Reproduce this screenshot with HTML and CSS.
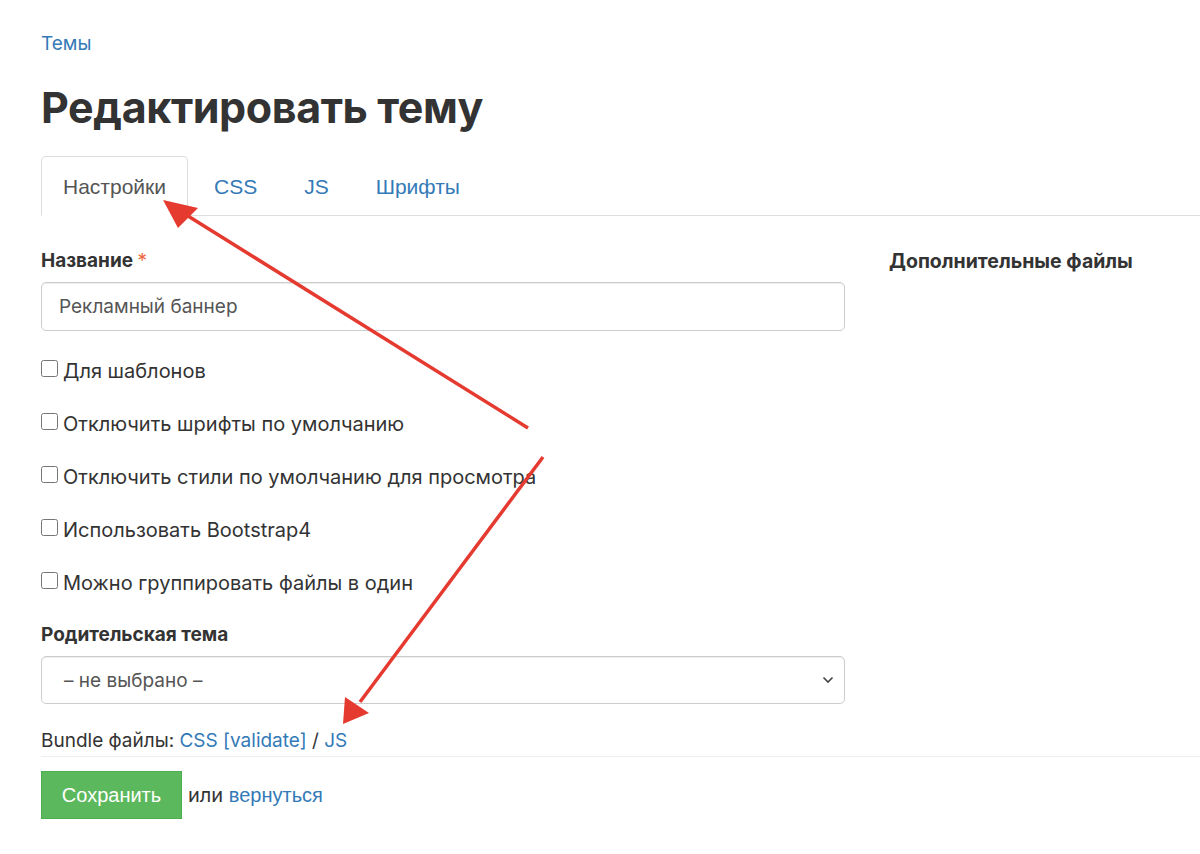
FILE: index.html
```html
<!DOCTYPE html>
<html lang="ru">
<head>
    <meta charset="UTF-8">
    <meta name="viewport" content="width=device-width, initial-scale=1.0">
    <title>Редактировать тему</title>
    <link rel="stylesheet" href="styles.css">
</head>
<body>
    <div class="page">
        <div class="crumbs"><a href="#">Темы</a></div>
        <h1>Редактировать тему</h1>

        <ul class="tabs">
            <li class="active"><a href="#">Настройки</a></li>
            <li><a href="#">CSS</a></li>
            <li><a href="#">JS</a></li>
            <li><a href="#">Шрифты</a></li>
        </ul>

        <div class="row">
            <div class="col-main">
                <label class="field-label">Название <span class="req">*</span></label>
                <input type="text" class="form-control" value="Рекламный баннер">

                <div class="check"><input type="checkbox" id="c1"><label for="c1">Для шаблонов</label></div>
                <div class="check"><input type="checkbox" id="c2"><label for="c2">Отключить шрифты по умолчанию</label></div>
                <div class="check"><input type="checkbox" id="c3"><label for="c3">Отключить стили по умолчанию для просмотра</label></div>
                <div class="check"><input type="checkbox" id="c4"><label for="c4">Использовать Bootstrap4</label></div>
                <div class="check"><input type="checkbox" id="c5"><label for="c5">Можно группировать файлы в один</label></div>

                <label class="field-label parent">Родительская тема</label>
                <div class="select">
                    <span>– не выбрано –</span>
                    <svg width="14" height="10" viewBox="0 0 14 10"><path d="M2.5 2.5 L7 7 L11.5 2.5" fill="none" stroke="#444" stroke-width="1.6"/></svg>
                </div>

                <div class="bundle">Bundle файлы: <a href="#">CSS</a> <a href="#">[validate]</a> / <a href="#">JS</a></div>
            </div>
            <div class="col-side">
                <div class="side-title">Дополнительные файлы</div>
            </div>
        </div>

        <div class="actions">
            <button class="btn-save">Сохранить</button>
            <span class="or">или <a href="#">вернуться</a></span>
        </div>
    </div>

    <!-- annotation arrows -->
    <svg class="arrows" width="1200" height="854" viewBox="0 0 1200 854">
        <line x1="528" y1="428" x2="188" y2="216" stroke="#e53a30" stroke-width="3.5"/>
        <polygon points="163,200 198,208 178,228" fill="#e53a30"/>
        <line x1="543" y1="457" x2="360" y2="702" stroke="#e53a30" stroke-width="3.5"/>
        <polygon points="343,724 345,697 369,713" fill="#e53a30"/>
    </svg>
</body>
</html>
```

FILE: styles.css
```css
body {
    margin: 0;
    padding: 0;
    background-color: #fff;
    font-family: Inter, "Noto Sans", sans-serif;
    font-size: 20px;
    color: #333;
}

a {
    color: #337ab7;
    text-decoration: none;
}

.page {
    padding: 0 0 0 41px;
}

.crumbs {
    padding-top: 31px;
    font-size: 19px;
    line-height: 26px;
}

h1 {
    margin: 22px 0 0 0;
    font-size: 43px;
    line-height: 56px;
    font-weight: 700;
    color: #333;
    letter-spacing: -0.4px;
}

.tabs {
    list-style: none;
    margin: 21px 0 0 0;
    padding: 0;
    display: flex;
    border-bottom: 1px solid #ddd;
}

.tabs li {
    margin-bottom: -1px;
}

.tabs a {
    display: block;
    padding: 0 21px;
    height: 58px;
    line-height: 60px;
    font-family: "Liberation Sans", Arial, sans-serif;
    font-size: 21px;
    color: #337ab7;
    border: 1px solid transparent;
    border-radius: 5px 5px 0 0;
}

.tabs li + li a {
    padding: 0 20px 0 25px;
}

.tabs li.active a {
    color: #555;
    background-color: #fff;
    border-color: #ddd;
    border-bottom-color: #fff;
}

.row {
    display: flex;
    gap: 44px;
    margin-top: 32px;
}

.col-main {
    width: 804px;
}

.field-label {
    display: block;
    font-weight: 700;
    font-size: 19px;
    line-height: 26px;
    color: #333;
}

.req {
    color: #f0643c;
    font-weight: 400;
}

.form-control {
    display: block;
    width: 100%;
    box-sizing: border-box;
    height: 49px;
    margin-top: 8px;
    padding: 0 17px;
    font-family: Inter, "Noto Sans", sans-serif;
    font-size: 19px;
    color: #555;
    border: 1px solid #ccc;
    border-radius: 5px;
    box-shadow: inset 0 1px 1px rgba(0, 0, 0, 0.075);
    outline: none;
}

.check {
    display: flex;
    align-items: center;
    height: 26px;
    margin-top: 27px;
}

.check input {
    width: 17px;
    height: 17px;
    margin: 0 5px 6px 0;
}

.check label {
    font-size: 20px;
    line-height: 26px;
}

.parent {
    margin-top: 26px;
}

.select {
    display: flex;
    align-items: center;
    justify-content: space-between;
    height: 46px;
    margin-top: 8px;
    padding: 0 9px 0 22px;
    border: 1px solid #ccc;
    border-radius: 5px;
    box-shadow: inset 0 1px 1px rgba(0, 0, 0, 0.075);
    font-size: 19px;
    color: #555;
}

.bundle {
    margin-top: 24px;
    font-size: 19px;
    line-height: 26px;
}

.side-title {
    font-weight: 700;
    font-size: 19.5px;
    line-height: 26px;
    color: #333;
}

.actions {
    margin-top: 2px;
    padding-top: 14px;
    border-top: 1px solid #eee;
    display: flex;
    align-items: center;
}

.btn-save {
    width: 141px;
    height: 48px;
    background-color: #5cb85c;
    border: 1px solid #4cae4c;
    color: #fff;
    font-family: "Liberation Sans", Arial, sans-serif;
    font-size: 20px;
    padding: 0;
    cursor: pointer;
}

.or {
    margin-left: 6px;
    font-size: 20px;
}

.or a {
    font-family: "Liberation Sans", Arial, sans-serif;
}

.arrows {
    position: absolute;
    left: 0;
    top: 0;
    pointer-events: none;
}
```
